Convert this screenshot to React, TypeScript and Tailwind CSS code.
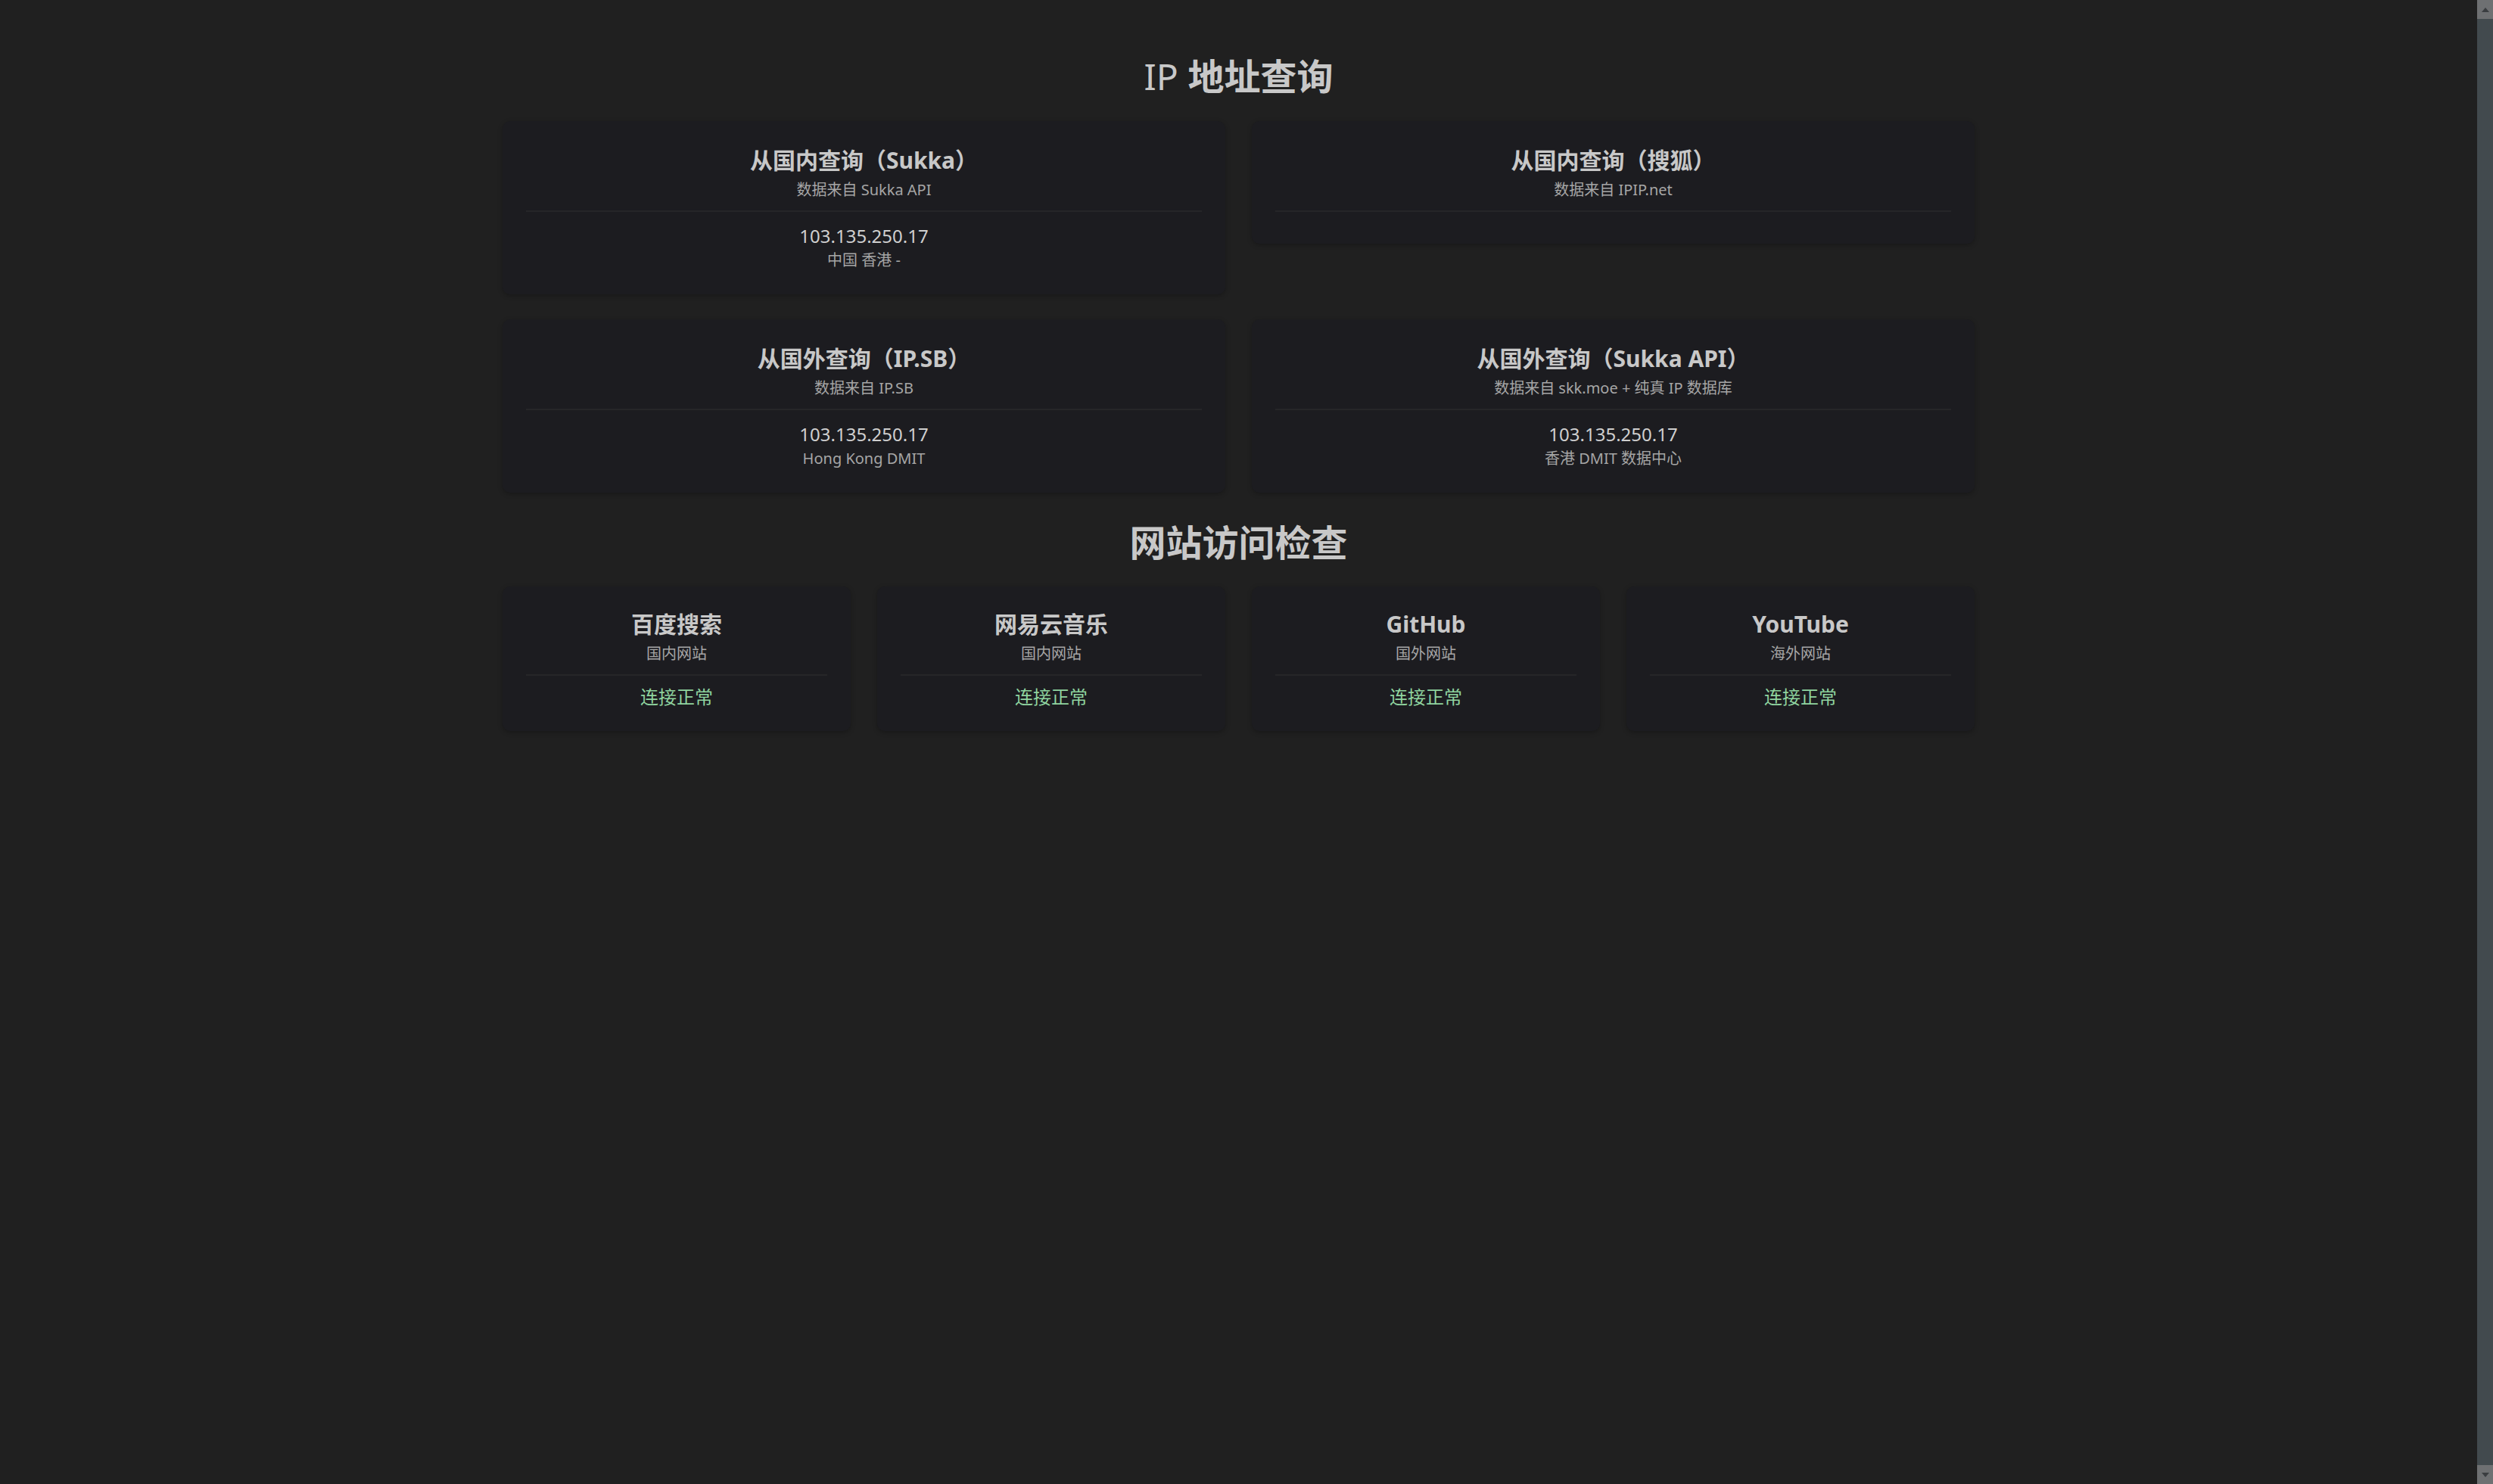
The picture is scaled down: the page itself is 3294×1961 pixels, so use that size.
const FONT = '"Noto Sans", "Noto Sans CJK SC", sans-serif';

type IpCard = {
  title: string;
  source: string;
  ip?: string;
  location?: string;
};

const ipCards: IpCard[] = [
  { title: "从国内查询（Sukka）", source: "数据来自 Sukka API", ip: "103.135.250.17", location: "中国 香港 -" },
  { title: "从国内查询（搜狐）", source: "数据来自 IPIP.net" },
  { title: "从国外查询（IP.SB）", source: "数据来自 IP.SB", ip: "103.135.250.17", location: "Hong Kong DMIT" },
  { title: "从国外查询（Sukka API）", source: "数据来自 skk.moe + 纯真 IP 数据库", ip: "103.135.250.17", location: "香港 DMIT 数据中心" },
];

const sites = [
  { name: "百度搜索", kind: "国内网站" },
  { name: "网易云音乐", kind: "国内网站" },
  { name: "GitHub", kind: "国外网站" },
  { name: "YouTube", kind: "海外网站" },
];

function CardHead({ title, sub }: { title: string; sub: string }) {
  return (
    <>
      <h3 className="h-[39px] text-[30px] leading-[39px] font-bold text-[#c8c8c8]">{title}</h3>
      <p className="mt-[7px] h-[26px] text-[20px] leading-[26px] text-[#a6a6a6]">{sub}</p>
      <div className="mt-[14px] mb-[10px] h-[2px] bg-[#262628]" />
    </>
  );
}

export default function App() {
  return (
    <div className="flex h-screen bg-[#202020]" style={{ fontFamily: FONT }}>
      <main className="flex-1 overflow-hidden">
        <div className="mx-auto w-[1945px] pt-[70px]">
          {/* IP lookup */}
          <h1 className="h-[62px] text-center text-[48px] leading-[62px] text-[#c8c8c8]">
            <span className="font-normal">IP </span>
            <span className="font-bold">地址查询</span>
          </h1>
          <div className="mt-[28px] grid grid-cols-2 items-start gap-x-[35px] gap-y-[33px]">
            {ipCards.map((c) => (
              <div
                key={c.title}
                className="rounded-[10px] bg-[#1c1c20] px-[31px] pt-[32px] pb-[32px] text-center shadow-[0_2px_6px_rgba(0,0,0,0.25)]"
              >
                <CardHead title={c.title} sub={c.source} />
                {c.ip && (
                  <div className="pt-[6px]">
                    <p className="h-[31px] text-[24px] leading-[31px] text-[#cfcfcf]">{c.ip}</p>
                    <p className="mt-[4px] h-[26px] text-[20px] leading-[26px] text-[#a6a6a6]">{c.location}</p>
                  </div>
                )}
              </div>
            ))}
          </div>

          {/* Site access check */}
          <h2 className="mt-[35px] h-[62px] text-center text-[48px] leading-[62px] font-bold text-[#c8c8c8]">
            网站访问检查
          </h2>
          <div className="mt-[27px] grid grid-cols-4 gap-[35px]">
            {sites.map((s) => (
              <div
                key={s.name}
                className="rounded-[10px] bg-[#1c1c20] px-[31px] pt-[30px] pb-[30px] text-center shadow-[0_2px_6px_rgba(0,0,0,0.25)]"
              >
                <CardHead title={s.name} sub={s.kind} />
                <p className="mt-[12px] h-[31px] text-[24px] leading-[31px] text-[#8fd49f]">连接正常</p>
              </div>
            ))}
          </div>
        </div>
      </main>

      {/* scrollbar */}
      <aside className="flex w-[21px] flex-col bg-[#424a4e]">
        <div className="flex h-[25px] items-center justify-center bg-[#6e7072]">
          <svg width="10" height="6" viewBox="0 0 10 6">
            <path d="M5 0 L10 6 L0 6 Z" fill="#3a3d40" />
          </svg>
        </div>
        <div className="flex-1" />
        <div className="flex h-[25px] items-center justify-center bg-[#6e7072]">
          <svg width="10" height="6" viewBox="0 0 10 6">
            <path d="M0 0 L10 0 L5 6 Z" fill="#3a3d40" />
          </svg>
        </div>
      </aside>
    </div>
  );
}
